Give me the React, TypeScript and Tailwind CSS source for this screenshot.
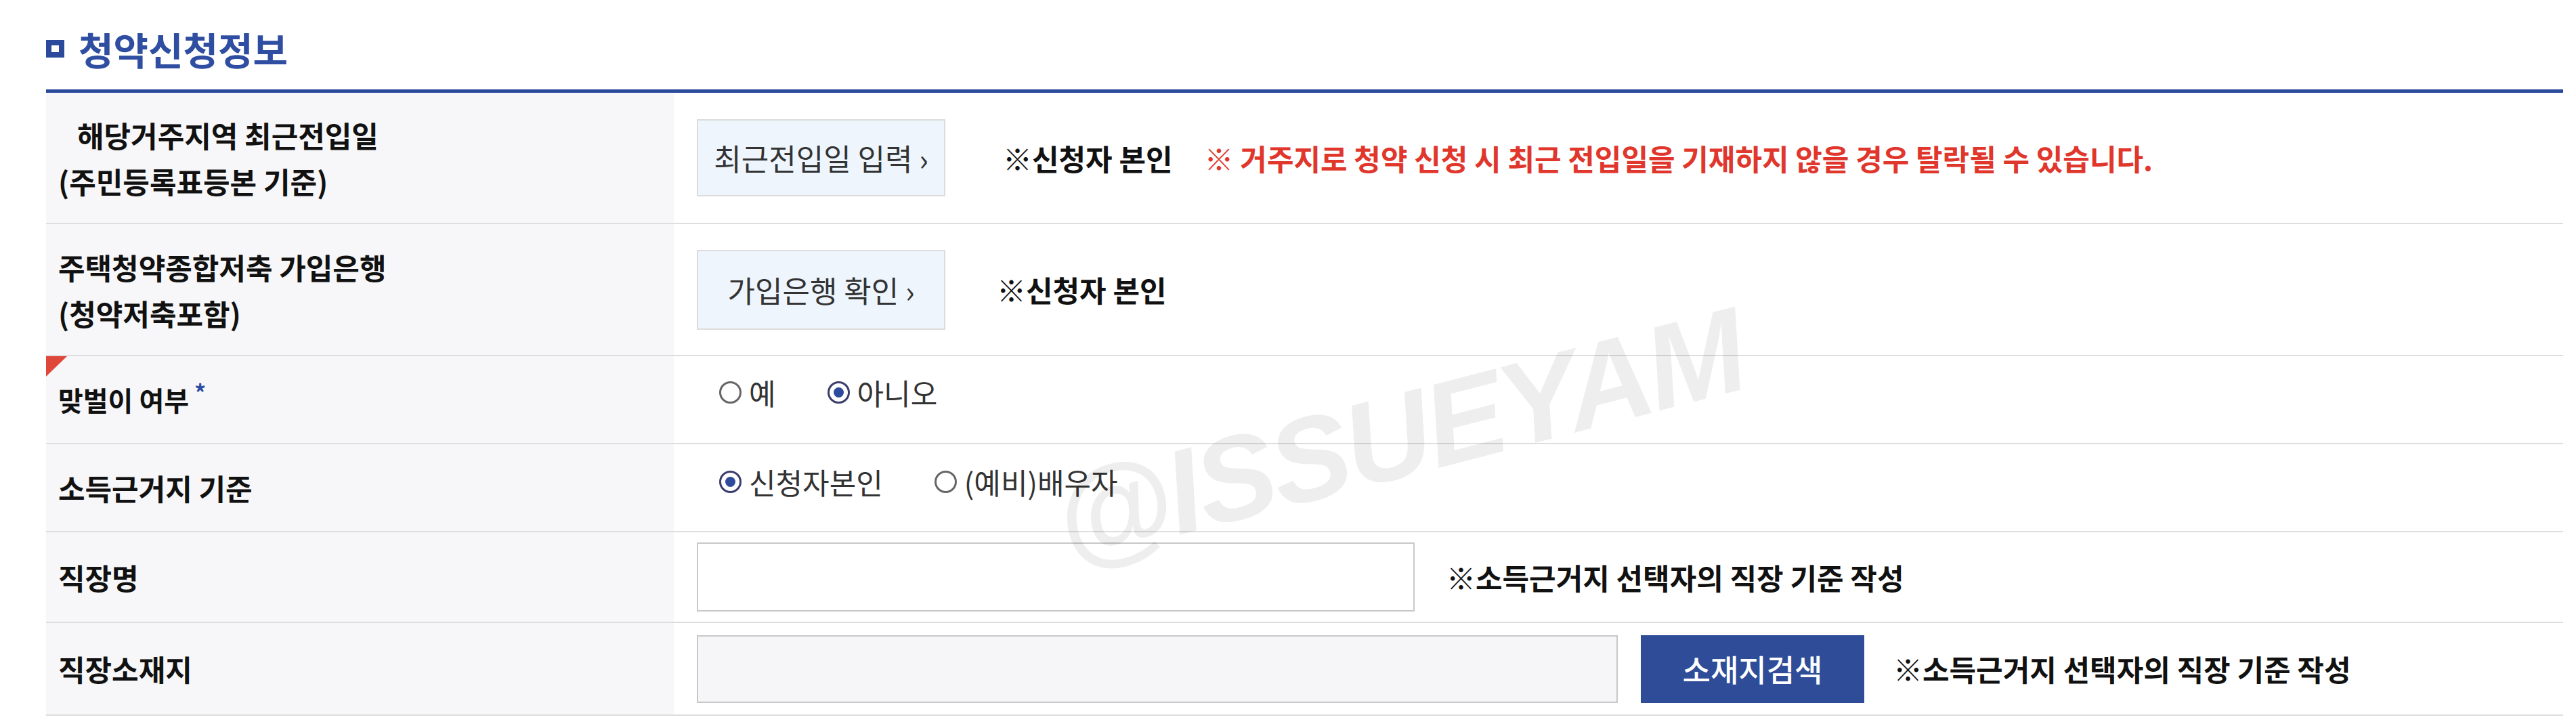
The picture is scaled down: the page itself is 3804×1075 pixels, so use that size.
import React from "react";

const Radio = ({ checked, label }: { checked?: boolean; label: string }) => (
  <label className="flex items-center gap-[11px]">
    <span
      className={`flex w-[33px] h-[33px] items-center justify-center rounded-full border-[3px] bg-white ${
        checked ? "border-[#3a3d6c]" : "border-[#666]"
      }`}
    >
      {checked && <span className="w-[15px] h-[15px] rounded-full bg-[#2d4a9c]" />}
    </span>
    <span className="text-[43px] leading-none text-[#333]">{label}</span>
  </label>
);

const Row = ({
  height,
  label,
  children,
  mark,
}: {
  height: string;
  label: React.ReactNode;
  children: React.ReactNode;
  mark?: boolean;
}) => (
  <div className={`grid grid-cols-[927px_1fr] border-b-2 border-[#dedede] ${height}`}>
    <div className="relative flex items-center bg-[#f7f7f9] pl-[18px] text-[43px] font-bold text-[#111]">
      {mark && (
        <span className="absolute left-0 top-0 w-[31px] h-[30px] bg-[#e0473b] [clip-path:polygon(0_0,100%_0,0_100%)]" />
      )}
      {label}
    </div>
    <div className="flex items-center pl-[34px]">{children}</div>
  </div>
);

export default function App() {
  return (
    <div className="relative w-[3804px] h-[1075px] overflow-hidden bg-white font-['Noto_Sans_CJK_KR',sans-serif]">
      <div className="pl-[68px] pr-[19px]">
        {/* 제목 */}
        <div className="flex h-[132px] items-center gap-[21px] pt-[12px]">
          <span className="w-[27px] h-[26px] border-[8px] border-[#2c4a9c] bg-white" />
          <h2 className="text-[56px] font-bold leading-none text-[#2f4ea1]">청약신청정보</h2>
        </div>
        <div className="h-[5px] bg-[#2c4a9c]" />

        <Row
          height="h-[194px]"
          label={
            <div className="leading-[68px]">
              <p className="pl-[28px]">해당거주지역 최근전입일</p>
              <p>(주민등록표등본 기준)</p>
            </div>
          }
        >
          <button className="w-[367px] h-[114px] border-2 border-[#dcdcdc] bg-[#eef5fd] text-[44px] leading-none text-[#333]">
            최근전입일 입력 ›
          </button>
          <span className="ml-[85px] text-[43px] font-bold text-[#111]">※신청자 본인</span>
          <span className="ml-[47px] text-[43px] font-bold text-[#e0362c]">
            ※ 거주지로 청약 신청 시 최근 전입일을 기재하지 않을 경우 탈락될 수 있습니다.
          </span>
        </Row>

        <Row
          height="h-[195px]"
          label={
            <div className="leading-[68px]">
              <p>주택청약종합저축 가입은행</p>
              <p>(청약저축포함)</p>
            </div>
          }
        >
          <button className="w-[367px] h-[118px] border-2 border-[#dcdcdc] bg-[#eef5fd] text-[44px] leading-none text-[#333]">
            가입은행 확인 ›
          </button>
          <span className="ml-[76px] text-[43px] font-bold text-[#111]">※신청자 본인</span>
        </Row>

        <Row
          height="h-[130px]"
          mark
          label={
            <span className="flex items-start text-[40px]">
              맞벌이 여부
              <span className="ml-[8px] mt-[2px] text-[34px] leading-none text-[#2f4ea1]">*</span>
            </span>
          }
        >
          <div className="flex items-center gap-[76px] pl-[33px] pb-[22px]">
            <Radio label="예" />
            <Radio checked label="아니오" />
          </div>
        </Row>

        <Row height="h-[130px]" label="소득근거지 기준">
          <div className="flex items-center gap-[76px] pl-[33px] pb-[18px]">
            <Radio checked label="신청자본인" />
            <Radio label="(예비)배우자" />
          </div>
        </Row>

        <Row height="h-[134px]" label="직장명">
          <input className="w-[1060px] h-[102px] border-2 border-[#c8c8c8] bg-white" />
          <span className="ml-[47px] text-[43px] font-bold text-[#111]">
            ※소득근거지 선택자의 직장 기준 작성
          </span>
        </Row>

        <Row height="h-[137px]" label="직장소재지">
          <input disabled className="w-[1360px] h-[100px] border-2 border-[#c8c8c8] bg-[#f6f6f8]" />
          <button className="ml-[34px] w-[330px] h-[100px] bg-[#2f4c98] text-[45px] font-medium leading-none text-white">
            소재지검색
          </button>
          <span className="ml-[43px] text-[43px] font-bold text-[#111]">
            ※소득근거지 선택자의 직장 기준 작성
          </span>
        </Row>
      </div>

      {/* watermark */}
      <div className="pointer-events-none absolute left-[2066px] top-[643px] -translate-x-1/2 -translate-y-1/2 -rotate-[14.5deg] whitespace-nowrap font-['Liberation_Sans',sans-serif] text-[176px] font-bold italic leading-none tracking-[-4px] text-black/[0.065]">
        @ISSUEYAM
      </div>
    </div>
  );
}
